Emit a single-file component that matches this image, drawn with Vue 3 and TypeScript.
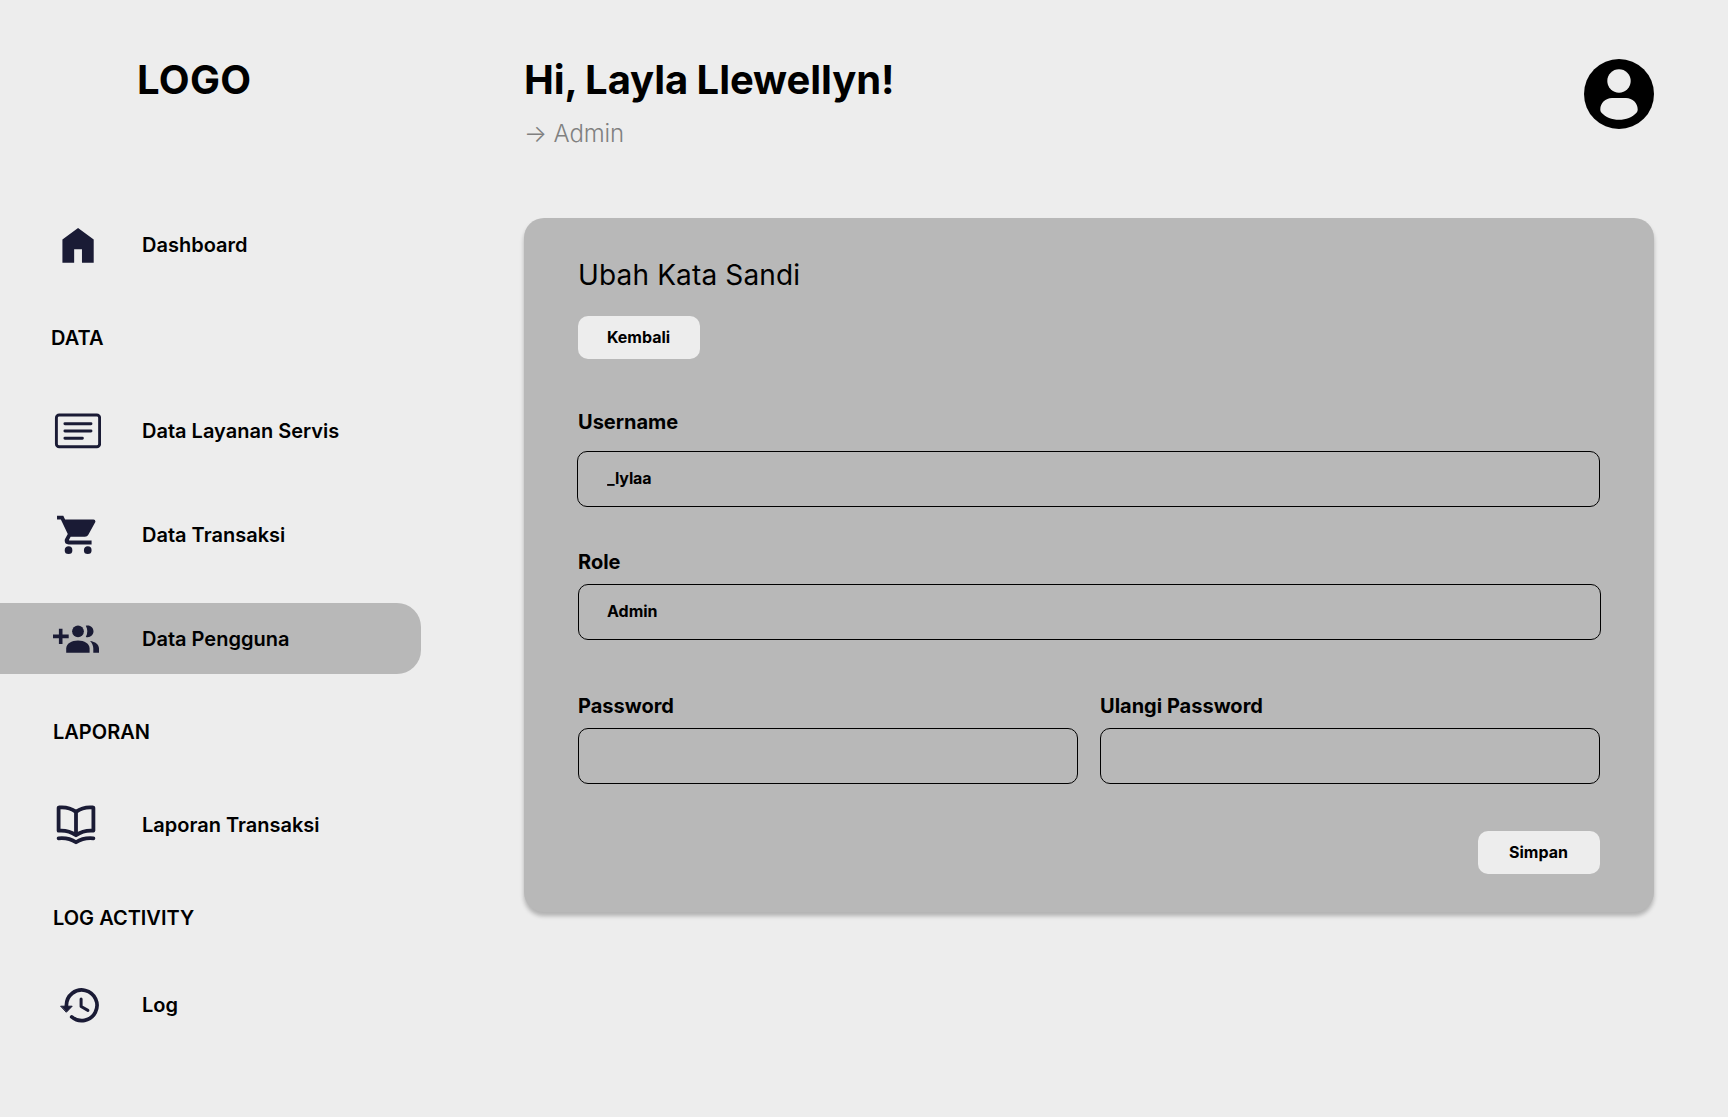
<script setup lang="ts">
import { ref } from 'vue'

type IconName = 'home' | 'list' | 'cart' | 'users' | 'book' | 'history'

interface NavItem {
  label: string
  icon: IconName
  active?: boolean
}

interface NavGroup {
  title?: string
  items: NavItem[]
}

const groups: NavGroup[] = [
  { items: [{ label: 'Dashboard', icon: 'home' }] },
  {
    title: 'DATA',
    items: [
      { label: 'Data Layanan Servis', icon: 'list' },
      { label: 'Data Transaksi', icon: 'cart' },
      { label: 'Data Pengguna', icon: 'users', active: true },
    ],
  },
  { title: 'LAPORAN', items: [{ label: 'Laporan Transaksi', icon: 'book' }] },
  { title: 'LOG ACTIVITY', items: [{ label: 'Log', icon: 'history' }] },
]

const username = ref('_lylaa')
const role = ref('Admin')
const password = ref('')
const repeat = ref('')
</script>

<template>
  <div class="page">
    <aside class="sidebar">
      <div class="logo">LOGO</div>
      <nav>
        <section v-for="(group, i) in groups" :key="i" class="group">
          <h2 v-if="group.title" class="group-title">{{ group.title }}</h2>
          <a v-for="item in group.items" :key="item.label" class="item" :class="{ active: item.active }">
            <svg class="icon" viewBox="0 0 48 47" fill="currentColor">
              <path
                v-if="item.icon === 'home'"
                transform="translate(1.6 1.1) scale(1.955 1.94)"
                d="M4 21V9l8-6 8 6v12h-6v-7h-4v7z"
              />
              <g v-else-if="item.icon === 'list'" fill="none" stroke="currentColor" stroke-width="2.9">
                <rect x="3.4" y="8" width="43.2" height="31.8" rx="2.8" />
                <path stroke-linecap="round" d="M11.9 16.7H38M11.9 24H38M11.9 31.2H29.4" />
              </g>
              <path
                v-else-if="item.icon === 'cart'"
                transform="translate(2.1 .8) scale(1.92)"
                d="M17 18c-1.11 0-2 .89-2 2a2 2 0 0 0 2 2 2 2 0 0 0 2-2 2 2 0 0 0-2-2M1 2v2h2l3.6 7.59-1.36 2.45c-.15.28-.24.61-.24.96a2 2 0 0 0 2 2h12v-2H7.42a.25.25 0 0 1-.25-.25c0-.05.01-.09.03-.12L8.1 13h7.45c.75 0 1.41-.42 1.75-1.03l3.58-6.47c.07-.16.12-.33.12-.5a1 1 0 0 0-1-1H5.21l-.94-2M7 18c-1.11 0-2 .89-2 2a2 2 0 0 0 2 2 2 2 0 0 0 2-2 2 2 0 0 0-2-2"
              />
              <g v-else-if="item.icon === 'users'">
                <path d="M5.9 13.7h3.6v5.8h6.2v3.7H9.5V29H5.9v-5.8H0v-3.7h5.9z" />
                <circle cx="25" cy="16.3" r="5.9" />
                <path d="M13.2 37.7v-4.3c0-4.8 5.4-7.9 11.8-7.9s11.6 3.1 11.6 7.9v4.3z" />
                <path d="M32.8 10.7c4.2-1.2 7.7 1.8 7.7 5.6s-3.5 6.8-7.7 5.6c2-3.4 2-7.8 0-11.2z" />
                <path d="M37 26c5.2.6 9 3.6 9 7.6v4.1h-5.700v-4.100c0-3-1.200-5.700-3.300-7.600z" />
              </g>
              <g
                v-else-if="item.icon === 'book'"
                fill="none"
                stroke="currentColor"
                stroke-width="3.8"
                stroke-linejoin="round"
                stroke-linecap="round"
              >
                <path
                  d="M23 10.900C18.600 7.700 12.200 5.900 6.200 6.500c-.5 0-.6.3-.6.8v22.400c6-.5 12.400 1 17.400 4.500 5-3.500 11.400-5 17.400-4.500V7.300c0-.5-.1-.8-.6-.8-6-.6-12.400 1.200-16.800 4.400zM23 11v23M5.600 37.300c6.300-.6 12.400.6 17.400 4 5-3.400 11.100-4.600 17.400-4"
                />
              </g>
              <g v-else fill="none" stroke="currentColor" stroke-linejoin="round" stroke-linecap="round">
                <path stroke-width="3.700" d="M13.400 24.500v-1.200a15.300 15.300 0 1 1 5.300 11.600" />
                <path stroke-width="3" d="M28.100 17v7.500l6.800 3.900" />
                <path stroke-width="1" fill="currentColor" d="M8 24.200h11.200l-5.600 5.800z" />
              </g>
            </svg>
            <span>{{ item.label }}</span>
          </a>
        </section>
      </nav>
    </aside>

    <main class="main">
      <header class="header">
        <div>
          <h1 class="greeting">Hi, Layla Llewellyn!</h1>
          <p class="role">→ Admin</p>
        </div>
        <svg class="avatar" viewBox="0 0 70 70">
          <circle cx="35" cy="35" r="35" fill="#000" />
          <circle cx="35" cy="22" r="11.700" fill="#ededed" />
          <path
            fill="#ededed"
            d="M28 39h14C48.500 39 53.700 44.200 53.700 50.300c0 1.300-.4 2.600-1.200 3.400C48.500 58 42 60.800 35 60.800s-13.500-2.800-17.500-7.100c-.8-.8-1.200-2.100-1.200-3.400C16.300 44.200 21.500 39 28 39z"
          />
        </svg>
      </header>

      <form class="card" @submit.prevent>
        <h2 class="title">Ubah Kata Sandi</h2>
        <button type="button" class="button">Kembali</button>

        <div class="field username">
          <label for="username">Username</label>
          <input id="username" v-model="username" type="text" />
        </div>
        <div class="field role-field">
          <label for="role">Role</label>
          <input id="role" v-model="role" type="text" />
        </div>
        <div class="row">
          <div class="field">
            <label for="password">Password</label>
            <input id="password" v-model="password" type="password" />
          </div>
          <div class="field">
            <label for="repeat">Ulangi Password</label>
            <input id="repeat" v-model="repeat" type="password" />
          </div>
        </div>

        <button type="submit" class="button save">Simpan</button>
      </form>
    </main>
  </div>
</template>

<style>
body {
  margin: 0;
  background: #ededed;
}
</style>

<style scoped>
.page {
  box-sizing: border-box;
  display: flex;
  width: 1728px;
  height: 1117px;
  overflow: hidden;
  background: #ededed;
  color: #000;
  font-family: Inter, "Liberation Sans", sans-serif;
}
h1,
h2,
p {
  margin: 0;
}
.sidebar {
  width: 421px;
  flex: none;
}
.logo {
  margin: 56px 0 105px 137px;
  font-size: 40px;
  font-weight: 700;
  letter-spacing: 0.3px;
  line-height: 48px;
}
.group-title {
  margin: 46px 0 44px 53px;
  font-size: 20px;
  font-weight: 600;
  line-height: 25px;
}
.group:nth-child(2) .group-title {
  margin-left: 51px;
}
.group:last-child .group-title {
  margin-bottom: 39px;
}
.item {
  box-sizing: border-box;
  display: flex;
  align-items: center;
  gap: 41px;
  height: 71px;
  padding-left: 53px;
  border-radius: 0 24px 24px 0;
  font-size: 20px;
  font-weight: 600;
  line-height: 25px;
}
.item span {
  padding-top: 2px;
}
.group:last-child .item span {
  padding-top: 0;
}
.item + .item {
  margin-top: 33px;
}
.item.active {
  background: #b8b8b8;
}
.icon {
  width: 48px;
  height: 47px;
  color: #1a1b35;
}
.main {
  width: 1130px;
  margin-left: 103px;
}
.header {
  display: flex;
  justify-content: space-between;
  height: 218px;
}
.greeting {
  margin-top: 56px;
  font-size: 40px;
  font-weight: 700;
  letter-spacing: -0.08px;
  word-spacing: -0.9px;
  line-height: 48px;
}
.role {
  margin-top: 15px;
  font-size: 24px;
  font-weight: 300;
  letter-spacing: -0.1px;
  line-height: 29px;
  color: #808080;
}
.avatar {
  width: 70px;
  height: 70px;
  margin-top: 59px;
}
.card {
  box-sizing: border-box;
  display: flex;
  flex-direction: column;
  align-items: flex-start;
  height: 694px;
  padding: 40px 54px 38px;
  border-radius: 20px;
  background: #b8b8b8;
  box-shadow: 0 4px 4px rgba(0, 0, 0, 0.25);
}
.title {
  font-size: 28px;
  font-weight: 400;
  letter-spacing: 0.15px;
  line-height: 34px;
}
.button {
  width: 122px;
  height: 43px;
  margin-top: 24px;
  padding: 0 1px 0 0;
  border: 0;
  border-radius: 10px;
  background: #ededed;
  color: #000;
  font: 700 16px/19px Inter, "Liberation Sans", sans-serif;
}
.field {
  display: flex;
  flex-direction: column;
}
.field label {
  font-size: 20px;
  font-weight: 700;
  line-height: 24px;
}
.field input {
  box-sizing: border-box;
  height: 56px;
  margin: 10px 0 0;
  padding: 0 29px 2px;
  border: 1px solid #000;
  border-radius: 10px;
  outline: none;
  background: transparent;
  color: #000;
  font: 700 16px/19px Inter, "Liberation Sans", sans-serif;
}
.username {
  width: 1022px;
  margin-top: 51px;
}
.username input {
  margin: 17px 0 0 -1px;
  letter-spacing: -0.15px;
}
.role-field {
  width: 1023px;
  margin-top: 43px;
}
.role-field input {
  padding-left: 28px;
}
.row {
  display: grid;
  grid-template-columns: 500px 500px;
  gap: 22px;
  margin-top: 54px;
}
.save {
  align-self: flex-end;
  margin-top: 47px;
}
</style>
